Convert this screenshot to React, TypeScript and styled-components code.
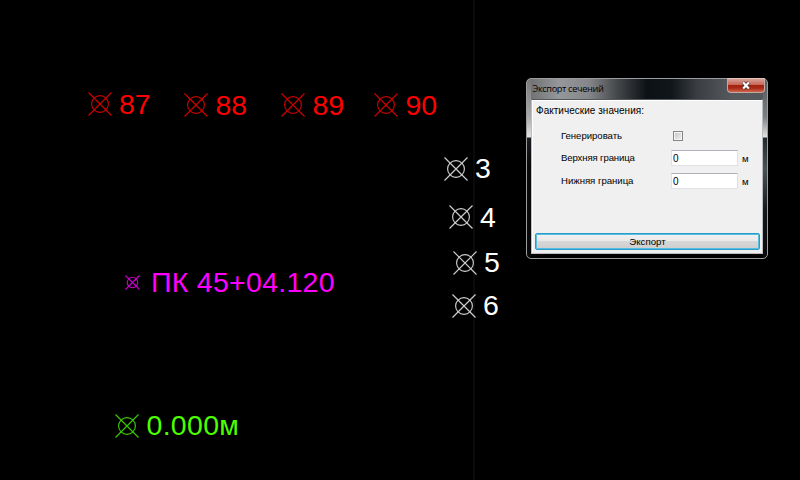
import React from "react";
import styled, { createGlobalStyle } from "styled-components";

const GlobalStyle = createGlobalStyle`
  body { margin: 0; background: #000; }
  * { box-sizing: border-box; }
`;

const Canvas = styled.main`
  position: relative;
  width: 800px;
  height: 480px;
  overflow: hidden;
  background: #000;
`;

const AxisLine = styled.div`
  position: absolute;
  left: 473px;
  top: 0;
  width: 2px;
  height: 480px;
  background: #0b0b0c;
`;

const Marker = styled.svg<{ $x: number; $y: number; $size: number; $color: string }>`
  position: absolute;
  left: ${(p) => p.$x - p.$size / 2}px;
  top: ${(p) => p.$y - p.$size / 2}px;
  width: ${(p) => p.$size}px;
  height: ${(p) => p.$size}px;
  fill: none;
  stroke: ${(p) => p.$color};
  stroke-width: 1.15;
`;

const PointLabel = styled.span<{ $x: number; $base: number; $color: string; $spacing: number }>`
  position: absolute;
  left: ${(p) => p.$x}px;
  top: ${(p) => p.$base - 26}px;
  font: 28.5px/32px "Liberation Sans", Arial, sans-serif;
  letter-spacing: ${(p) => p.$spacing}px;
  white-space: nowrap;
  color: ${(p) => p.$color};
`;

const Dialog = styled.section`
  position: absolute;
  left: 526px;
  top: 78px;
  width: 242px;
  height: 181px;
  display: flex;
  flex-direction: column;
  padding: 0 4px 4px;
  border: 1px solid #9b9c9e;
  border-radius: 5px;
  font-family: "Liberation Sans", Arial, sans-serif;
  color: #000;
  background:
    linear-gradient(#777 0, #a9a9ab 38px, #e3e3e4 58px, #1a1d20 59px, #08090b 85px, #07090b) left / 4px 100% no-repeat,
    linear-gradient(#53575a 0, #7d8083 38px, #e3e3e4 58px, #22282b 59px, #4b5254 90px, #15191c 130px, #07090b) right / 4px 100% no-repeat,
    linear-gradient(#000, #000) bottom / 100% 5px no-repeat,
    linear-gradient(90deg, #6c6d6f 0, #96979a 32px, #858689 62px, #45484b 90px, #0c1115 120px, #11161a 145px, #3a3e42 170px, #56595d 205px, #55595c);
`;

const TitleBar = styled.header`
  height: 20px;
  display: flex;
  justify-content: space-between;
  align-items: flex-start;
`;

const Title = styled.h1`
  margin: 2px 0 0 1.5px;
  font: 400 9.2px/15px "Open Sans", sans-serif;
  letter-spacing: -0.36px;
  color: #000;
`;

const CloseButton = styled.button`
  width: 38px;
  height: 15px;
  margin-right: -2px;
  margin-top: -1px;
  padding: 0;
  display: grid;
  place-items: center;
  border: 1px solid #c3a7a3;
  border-top-color: #e2c1bb;
  border-radius: 0 0 4px 4px;
  background: linear-gradient(#d8a096 0, #c66454 45%, #a5220e 50%, #a82a16 70%, #d2654c);
  svg { display: block; }
`;

const Client = styled.div`
  flex: 1;
  min-height: 0;
  display: flex;
  flex-direction: column;
  padding: 3px 2px 3px 3px;
  border: 1px solid #bcbdbe;
  border-top-color: #55585a;
  background: #f0f0f0;
  box-shadow: inset 0 1px #fff, inset 1px 0 #fff;
`;

const GroupLabel = styled.div`
  height: 15px;
  margin-left: 1px;
  font-size: 10px;
  line-height: 15px;
  letter-spacing: 0.03px;
  white-space: nowrap;
`;

const Form = styled.div`
  flex: 1;
  display: grid;
  grid-template-columns: 110px 68px 1fr;
  grid-template-rows: 23px 22px 24px;
  align-items: center;
  padding: 6px 0 0 26px;
`;

const FieldLabel = styled.label<{ $spacing: number }>`
  font-size: 9.6px;
  line-height: 12px;
  letter-spacing: ${(p) => p.$spacing}px;
  white-space: nowrap;
`;

const CheckBox = styled.span`
  width: 10px;
  height: 10px;
  margin-left: 2px;
  border: 1px solid #858687;
  background: linear-gradient(135deg, #bfc2c7, #f3f3f3);
  box-shadow: inset 0 0 0 1px #f4f4f4;
`;

const Input = styled.span`
  width: 67px;
  height: 16px;
  padding-left: 1px;
  border: 1px solid #dfe1e7;
  border-top-color: #b0b2b9;
  border-radius: 1px;
  background: #fff;
  font-size: 10px;
  line-height: 16px;
`;

const Unit = styled.span`
  padding: 2px 0 0 3px;
  font-size: 9.6px;
  line-height: 12px;
`;

const ExportButton = styled.button`
  height: 17px;
  padding: 0;
  border: 1px solid #2b9cc9;
  border-radius: 2px;
  background: linear-gradient(#f1f1f1 0, #e9e9e9 48%, #d7d7d7 50%, #cecece);
  box-shadow: inset 0 0 0 1px #56bfdf;
  font: 9.7px/15px "Liberation Sans", Arial, sans-serif;
  color: #000;
`;

interface Point {
  x: number; y: number; text: string; textX: number; base: number;
  color: string; stroke: string; size?: number; spacing?: number;
}

const points: Point[] = [
  { x: 99.5, y: 104, text: "87", textX: 119, base: 114, color: "#f00", stroke: "#c80000" },
  { x: 196, y: 105, text: "88", textX: 215.5, base: 115, color: "#f00", stroke: "#c80000" },
  { x: 293, y: 105, text: "89", textX: 312.5, base: 115, color: "#f00", stroke: "#c80000" },
  { x: 386, y: 105, text: "90", textX: 405.5, base: 115, color: "#f00", stroke: "#c80000" },
  { x: 456, y: 168.5, text: "3", textX: 475, base: 178, color: "#fff", stroke: "#ccc" },
  { x: 460.5, y: 217, text: "4", textX: 480, base: 227, color: "#fff", stroke: "#ccc" },
  { x: 465, y: 262.5, text: "5", textX: 484, base: 272, color: "#fff", stroke: "#ccc" },
  { x: 464, y: 305.5, text: "6", textX: 483, base: 315, color: "#fff", stroke: "#ccc" },
  { x: 132.5, y: 282.5, text: "ПК 45+04.120", textX: 151, base: 292, color: "#f0f", stroke: "#c800c8", size: 15, spacing: 0.28 },
  { x: 127, y: 425.5, text: "0.000м", textX: 146.5, base: 435, color: "#4cff00", stroke: "#3cc800", spacing: 0.3 },
];

const PointMark = ({ point }: { point: Point }) => {
  const size = point.size ?? 24;
  const c = size / 2;
  return (
    <>
      <Marker viewBox={`0 0 ${size} ${size}`} $x={point.x} $y={point.y} $size={size} $color={point.stroke}>
        <circle cx={c} cy={c} r={size * 0.35} />
        <path d={`M.5 .5L${size - 0.5} ${size - 0.5}M${size - 0.5} .5L.5 ${size - 0.5}`} />
      </Marker>
      <PointLabel $x={point.textX} $base={point.base} $color={point.color} $spacing={point.spacing ?? 0}>
        {point.text}
      </PointLabel>
    </>
  );
};

export default function App() {
  return (
    <Canvas>
      <GlobalStyle />
      <AxisLine />
      {points.map((point) => <PointMark key={point.text} point={point} />)}
      <Dialog>
        <TitleBar>
          <Title>Экспорт сечений</Title>
          <CloseButton aria-label="Закрыть">
            <svg width="10" height="9" viewBox="0 0 10 9">
              <path d="M2.2 1.5L7.8 7.5M7.8 1.5L2.2 7.5" stroke="#4c3d42" strokeWidth="3.8" />
              <path d="M2.2 1.5L7.8 7.5M7.8 1.5L2.2 7.5" stroke="#fff" strokeWidth="2" />
            </svg>
          </CloseButton>
        </TitleBar>
        <Client>
          <GroupLabel>Фактические значения:</GroupLabel>
          <Form>
            <FieldLabel $spacing={-0.03}>Генерировать</FieldLabel>
            <CheckBox role="checkbox" aria-checked="false" />
            <span />
            <FieldLabel $spacing={-0.13}>Верхняя граница</FieldLabel>
            <Input>0</Input>
            <Unit>м</Unit>
            <FieldLabel $spacing={-0.02}>Нижняя граница</FieldLabel>
            <Input>0</Input>
            <Unit>м</Unit>
          </Form>
          <ExportButton>Экспорт</ExportButton>
        </Client>
      </Dialog>
    </Canvas>
  );
}
